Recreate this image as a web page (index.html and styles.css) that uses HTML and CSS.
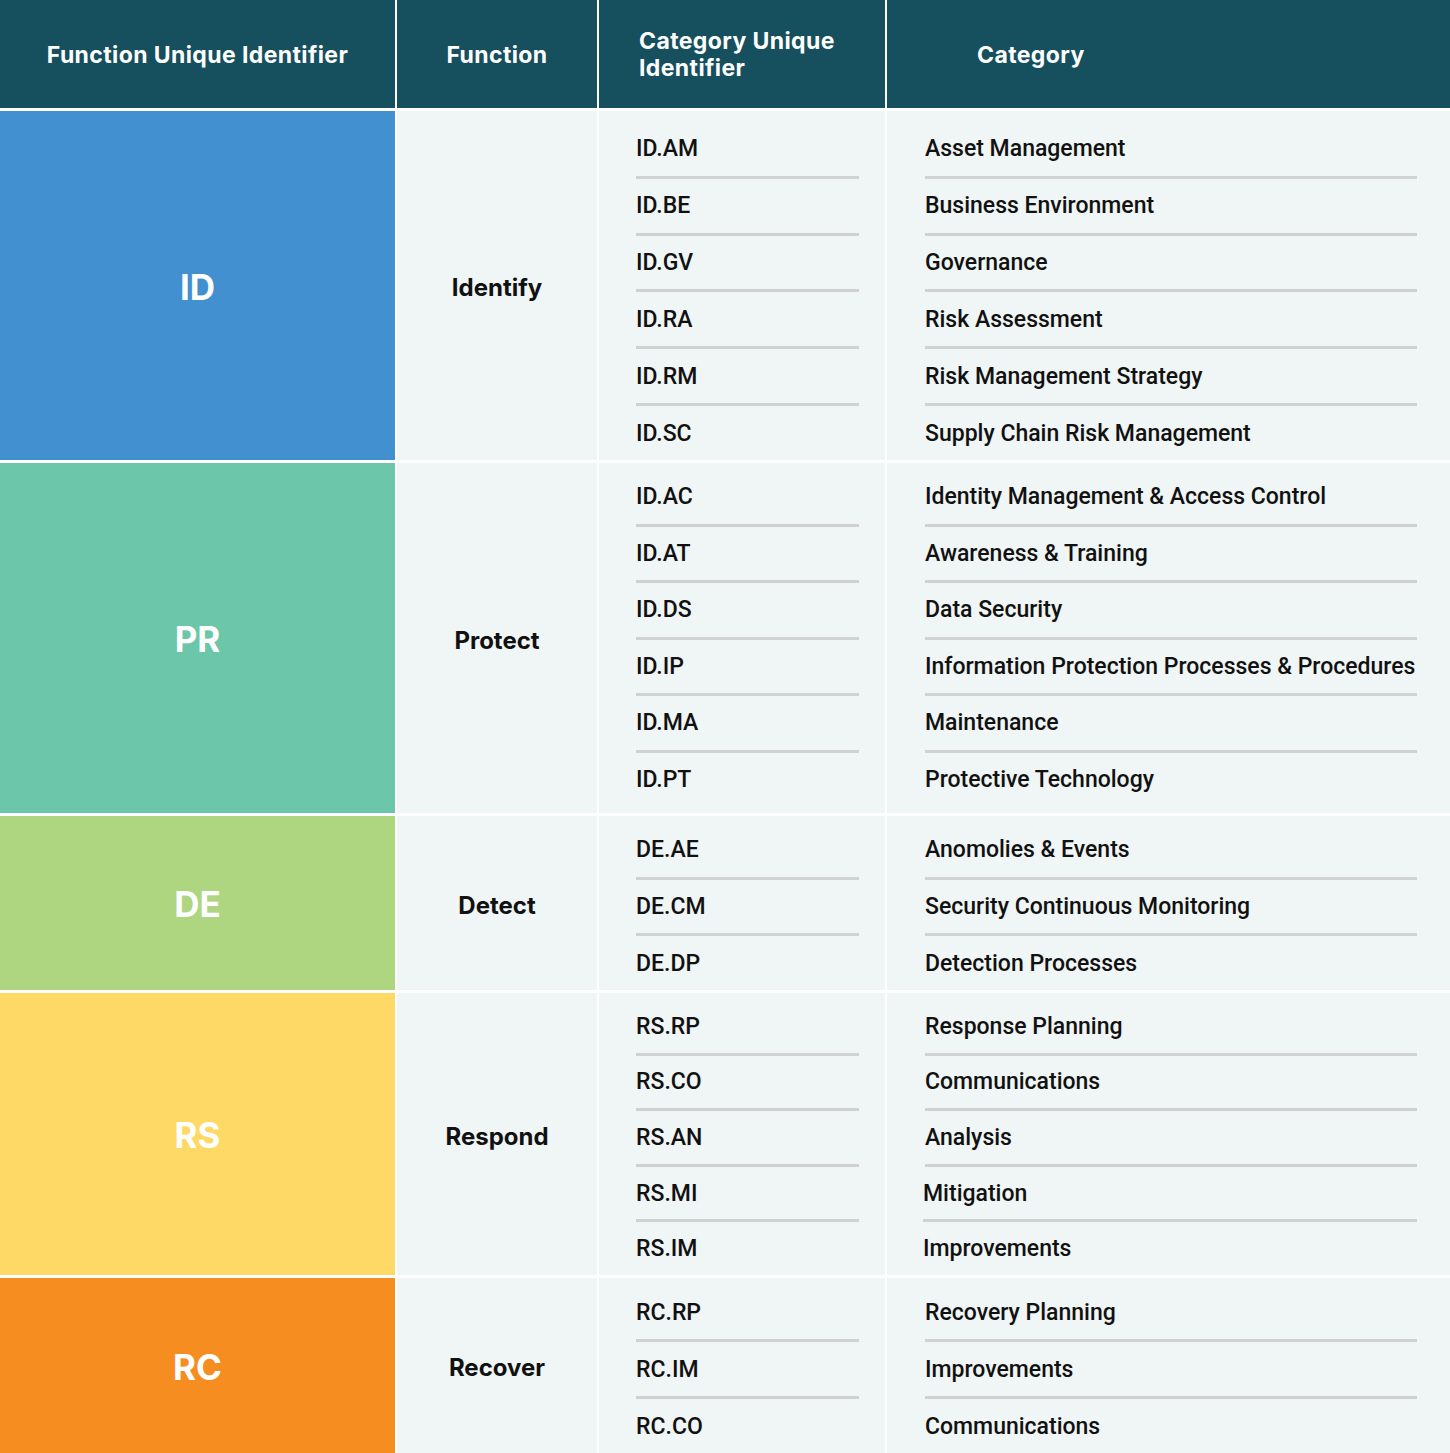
FILE: index.html
```html
<!DOCTYPE html>
<html lang="en">
<head>
<meta charset="utf-8">
<title>NIST CSF Functions and Categories</title>
<link rel="stylesheet" href="styles.css">
</head>
<body>
<div class="table">
  <div class="th th-center">Function Unique Identifier</div>
  <div class="th th-center">Function</div>
  <div class="th th-left th-cuid">Category Unique<br>Identifier</div>
  <div class="th th-left th-cat">Category</div>

  <div class="code c-id">ID</div>
  <div class="fn">Identify</div>
  <div class="list ids g-id">
    <div class="item">ID.AM</div><div class="item">ID.BE</div><div class="item">ID.GV</div><div class="item">ID.RA</div><div class="item">ID.RM</div><div class="item">ID.SC</div>
  </div>
  <div class="list cats g-id">
    <div class="item">Asset Management</div><div class="item">Business Environment</div><div class="item">Governance</div><div class="item">Risk Assessment</div><div class="item">Risk Management Strategy</div><div class="item">Supply Chain Risk Management</div>
  </div>

  <div class="code c-pr">PR</div>
  <div class="fn">Protect</div>
  <div class="list ids g-pr">
    <div class="item">ID.AC</div><div class="item">ID.AT</div><div class="item">ID.DS</div><div class="item">ID.IP</div><div class="item">ID.MA</div><div class="item">ID.PT</div>
  </div>
  <div class="list cats g-pr">
    <div class="item">Identity Management &amp; Access Control</div><div class="item">Awareness &amp; Training</div><div class="item">Data Security</div><div class="item">Information Protection Processes &amp; Procedures</div><div class="item">Maintenance</div><div class="item">Protective Technology</div>
  </div>

  <div class="code c-de">DE</div>
  <div class="fn">Detect</div>
  <div class="list ids g-de">
    <div class="item">DE.AE</div><div class="item">DE.CM</div><div class="item">DE.DP</div>
  </div>
  <div class="list cats g-de">
    <div class="item">Anomolies &amp; Events</div><div class="item">Security Continuous Monitoring</div><div class="item">Detection Processes</div>
  </div>

  <div class="code c-rs">RS</div>
  <div class="fn">Respond</div>
  <div class="list ids g-rs">
    <div class="item">RS.RP</div><div class="item">RS.CO</div><div class="item">RS.AN</div><div class="item">RS.MI</div><div class="item">RS.IM</div>
  </div>
  <div class="list cats g-rs">
    <div class="item">Response Planning</div><div class="item">Communications</div><div class="item">Analysis</div><div class="item shift">Mitigation</div><div class="item shift">Improvements</div>
  </div>

  <div class="code c-rc">RC</div>
  <div class="fn">Recover</div>
  <div class="list ids g-rc">
    <div class="item">RC.RP</div><div class="item">RC.IM</div><div class="item">RC.CO</div>
  </div>
  <div class="list cats g-rc">
    <div class="item">Recovery Planning</div><div class="item">Improvements</div><div class="item">Communications</div>
  </div>
</div>
</body>
</html>
```

FILE: styles.css
```css
html, body {
  margin: 0;
  padding: 0;
  background: #ffffff;
}

.table {
  display: grid;
  grid-template-columns: 395px 200px 286px 563px;
  grid-template-rows: 108px 349px 350px 174px 282px 175px;
  column-gap: 2px;
  row-gap: 3px;
  width: 1450px;
  background: #ffffff;
}

.th {
  background: #164f5e;
  color: #ffffff;
  font-family: "Inter", "Open Sans", sans-serif;
  font-weight: 700;
  font-size: 23px;
  letter-spacing: 0.4px;
  line-height: 27px;
  display: flex;
  align-items: center;
  padding-top: 2px;
}

.th-center {
  justify-content: center;
  text-align: center;
}

.th-cuid {
  padding-left: 40px;
}

.th-cat {
  padding-left: 90px;
}

.code {
  display: flex;
  align-items: center;
  justify-content: center;
  color: #ffffff;
  font-family: "Inter", "Open Sans", sans-serif;
  font-weight: 700;
  font-size: 35px;
  padding-top: 2px;
}

.c-id { background: #4290cf; }
.c-pr { background: #6cc6a9; }
.c-de { background: #aed580; }
.c-rs { background: #ffd966; }
.c-rc { background: #f68d20; }

.fn {
  background: #f0f5f5;
  display: flex;
  align-items: center;
  justify-content: center;
  color: #111111;
  font-family: "Inter", "Open Sans", sans-serif;
  font-weight: 700;
  font-size: 24px;
  padding-top: 4px;
}

.list {
  background: #f0f5f5;
  display: flex;
  flex-direction: column;
  box-sizing: border-box;
}

.g-id { padding-top: 11px; }
.g-pr { padding-top: 7px; padding-bottom: 7px; }
.g-de { padding-top: 7px; }
.g-rs { padding-top: 7px; }
.g-rc { padding-top: 7px; }

.ids {
  padding-left: 37px;
  padding-right: 26px;
}

.cats {
  padding-left: 38px;
  padding-right: 33px;
}

.item {
  flex: 1 1 0;
  display: flex;
  align-items: center;
  border-bottom: 3px solid #d0d2d2;
  color: #111111;
  font-family: "Roboto", "Liberation Sans", sans-serif;
  font-weight: 500;
  font-size: 23px;
  white-space: nowrap;
}

.item:last-child {
  border-bottom: none;
}

.shift {
  margin-left: -2px;
}
```
